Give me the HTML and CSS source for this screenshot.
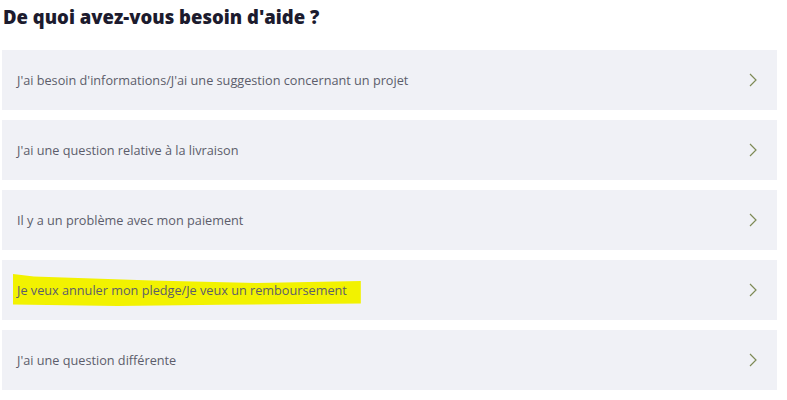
FILE: index.html
```html
<!DOCTYPE html>
<html>
<head>
<meta charset="UTF-8">
<title>Aide</title>
<link rel="stylesheet" href="styles.css">
</head>
<body>
	<div class="aide">
		<h2 class="titre">De quoi avez-vous besoin d'aide ?</h2>
		<ul class="choix">
			<li class="option"><span class="libelle">J'ai besoin d'informations/J'ai une suggestion concernant un projet</span>
				<svg class="fleche" width="8" height="14" viewBox="0 0 8 14"><path d="M1 1 L7 7 L1 13" fill="none" stroke="#7d8a55" stroke-width="1.2"/></svg></li>
			<li class="option"><span class="libelle">J'ai une question relative à la livraison</span>
				<svg class="fleche" width="8" height="14" viewBox="0 0 8 14"><path d="M1 1 L7 7 L1 13" fill="none" stroke="#7d8a55" stroke-width="1.2"/></svg></li>
			<li class="option"><span class="libelle">Il y a un problème avec mon paiement</span>
				<svg class="fleche" width="8" height="14" viewBox="0 0 8 14"><path d="M1 1 L7 7 L1 13" fill="none" stroke="#7d8a55" stroke-width="1.2"/></svg></li>
			<li class="option"><span class="libelle surligne">Je veux annuler mon pledge/Je veux un remboursement</span>
				<svg class="fleche" width="8" height="14" viewBox="0 0 8 14"><path d="M1 1 L7 7 L1 13" fill="none" stroke="#7d8a55" stroke-width="1.2"/></svg></li>
			<li class="option"><span class="libelle">J'ai une question différente</span>
				<svg class="fleche" width="8" height="14" viewBox="0 0 8 14"><path d="M1 1 L7 7 L1 13" fill="none" stroke="#7d8a55" stroke-width="1.2"/></svg></li>
		</ul>
	</div>
</body>
</html>
```

FILE: styles.css
```css
body {
	margin: 0;
	background: #fff;
	font-family: "Open Sans", "Noto Sans", sans-serif;
}

.aide {
	padding: 0 10px 0 2px;
}

.titre {
	margin: 0;
	padding: 4px 0 0 1px;
	height: 50px;
	box-sizing: border-box;
	font-size: 18.5px;
	font-weight: 800;
	color: #1c1b2e;
}

.choix {
	list-style: none;
	margin: 0;
	padding: 0;
	display: flex;
	flex-direction: column;
	gap: 10px;
}

.option {
	display: flex;
	align-items: center;
	justify-content: space-between;
	height: 60px;
	padding: 0 20px 0 15px;
	background: #f0f1f6;
	font-size: 12.7px;
	color: #5c5d6b;
}

.libelle {
	position: relative;
}

.surligne {
	background: #f2f200;
	padding: 7px 14px 7px 4px;
	margin-left: -4px;
	clip-path: polygon(0 0, 6% 8%, 40% 20%, 70% 28%, 100% 22%, 100% 92%, 60% 96%, 30% 100%, 0 95%);
}

.fleche {
	display: block;
}
```
